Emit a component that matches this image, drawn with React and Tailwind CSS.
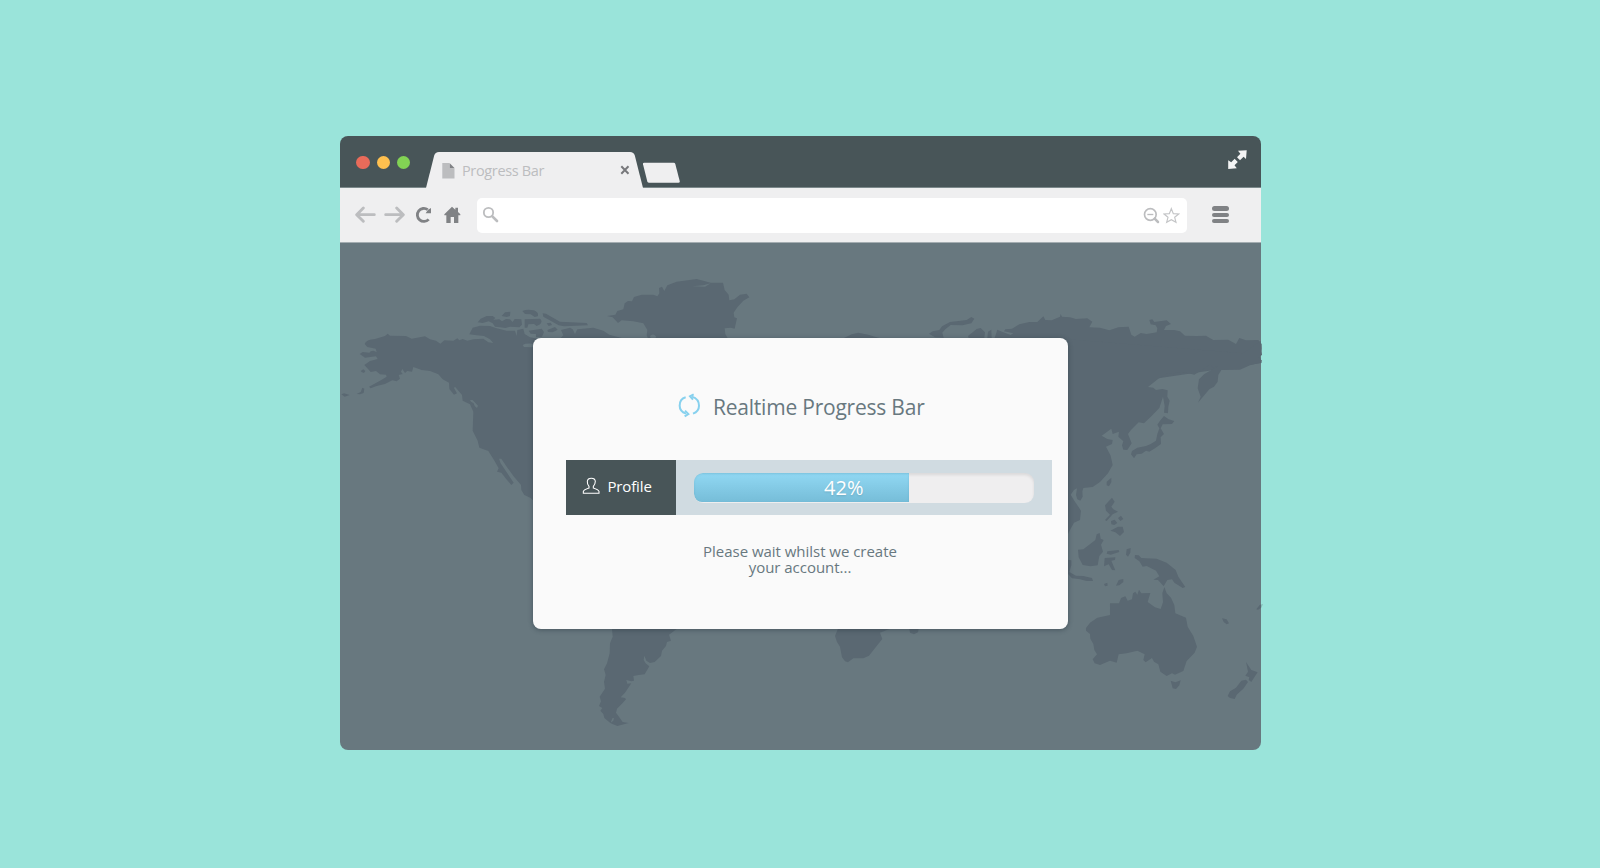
import React from "react";

function WorldMap() {
  return (
    <svg
      className="[grid-area:1/1] h-[507px] w-[921px] overflow-visible"
      viewBox="340 243 921 507"
      fill="#5a6872"
      aria-hidden="true"
    >
      {/* North America */}
      <g transform="translate(330 260) scale(0.33333)">
        <path d="M104 252Q108 239 135 237L165 228L173 221L180 227L228 228L245 236L285 229L300 238L318 242L331 251L343 241L370 242L382 235L388 241L398 237L412 242L430 238L460 236L475 247L490 249L480 238L462 228L440 226L418 223L428 203L450 197L480 198L500 205L530 212L555 212L560 228L562 210L580 206L584 222L600 232L640 240L800 250L830 330L760 440L700 560L660 640L720 700L680 735L608 720L602 714L583 705L574 690L573 675L552 650L530 620L514 596L507 596L512 610L530 637L551 668L544 675L528 656L514 638L501 635L506 625L492 600L475 573L448 563L443 542L428 512L430 455L420 433L398 422L396 405L375 380L372 384L381 400L372 404L358 387L357 368L338 358L325 343L300 333L275 330L250 321L246 335L232 333L225 339L217 327L213 335L218 342L206 345L210 356L200 364L187 361L165 372L140 378L122 385L117 380L150 362L170 350L168 344L150 343L138 333L122 336L112 325L103 315L120 303L143 297L138 289L105 293L89 282L98 276L118 278L122 274L130 272L140 276L137 266L112 261Z" />
        <path d="M92 333L100 328L106 333L102 339L95 336ZM34 403L42 400L59 405L44 410ZM80 402L92 396L97 383L103 386L101 399L90 403Z" />
        <path d="M420 420L428 420L444 437L441 444L434 438L431 430L423 425Z" fill="#68787f" />
        <path d="M578 255Q585 250 605 251L615 256L606 262L582 261Z" fill="#68787f" />
      </g>

      {/* Arctic islands and Greenland */}
      <g transform="translate(460 260) scale(0.33333)">
        <path d="M53 187L62 176L80 168L98 168L106 174L100 179L118 178L126 184L138 177L150 178L158 186L164 177L184 178L186 194L178 202L150 200L136 204L120 202L105 200L98 190L86 184L68 189Z" />
        <path d="M125 168L135 157L151 155L150 168L140 171ZM187 153Q200 147 222 151Q238 158 233 169L224 171L212 163L195 162ZM194 178L240 176Q250 185 238 194L230 198L222 192L205 193L202 203L194 203Z" />
        <path d="M248 160L258 161L300 185L380 189L384 196L312 199L296 196L250 170ZM260 190L272 188L276 195L266 198ZM262 210L285 201L293 209L278 217L264 216ZM206 212L245 206L252 216L246 230L228 231L228 222L212 221Z" />
        <path d="M303 210L330 203L338 208L345 222L352 208L400 203L430 212L448 224L485 234L500 250L290 250L280 234L300 236L310 226Z" />
        <path d="M441 168L466 164L472 153L490 148L494 130L504 123L516 124L522 111L545 104L580 104L592 109L598 100L597 84L606 80L613 93L622 76L650 65L710 57L752 68L789 68L794 90L806 104L808 121L823 118L840 104L860 101L868 112L850 122L832 142L821 158L823 172L831 175L824 206L812 203L794 205L796 222L804 236L790 270L740 340L680 400L620 330L575 260L560 226L562 210L550 190L520 184L485 181L474 189L465 179L458 172Z" />
        <path d="M697 79L730 76L752 70L735 80ZM570 228Q579 218 589 230L586 234L572 234Z" fill="#68787f" />
      </g>

      {/* Scandinavia and northern Asia */}
      <g transform="translate(780 300) scale(0.33333)">
        <path d="M192 114L215 103L235 98L265 104L295 113L330 125L420 130L430 155L540 140L560 122L680 112L700 100L672 94L676 88L696 86L718 73L748 66L772 66L790 49L796 60L815 61L840 50L842 42L846 50L870 52L888 57L922 55L937 65L928 82L960 83L988 91L1015 82L1046 80L1054 104L1064 110L1082 99L1100 102L1130 97L1132 85L1127 76L1112 73L1108 60L1117 58L1123 66L1160 61L1173 72L1158 78L1152 90L1182 90L1200 94L1215 107L1250 108L1278 107L1300 120L1345 119L1368 132L1378 114L1398 121L1435 120L1445 132L1445 146L1440 168L1445 189L1100 240L860 280L500 300L260 300L130 260L150 190Z" />
        <path d="M447 101L458 94L478 90L486 79L510 66L560 60L574 51L583 56L574 70L548 76L512 75L496 88L487 98L491 113L465 112ZM564 108L590 87L602 84L615 97L613 114L566 114ZM622 114L624 95L634 89L635 114ZM644 114L652 89L668 96L690 104L696 114Z" />
      </g>

      {/* East Asia */}
      <g transform="translate(1050 300) scale(0.33333)">
        <path d="M-40 110L580 160L632 122L636 165L626 172L636 182L632 188L600 196L570 209L514 210L505 225L503 245L492 260L478 268L444 308L452 290L443 265L447 238L463 222L506 198L490 203L480 192L462 206L433 224L400 216L350 222L325 236L294 261L310 263L318 270L337 267L353 271L352 290L359 302L355 320L354 340L342 338L344 318L339 290L328 324L304 349L282 370L266 367L243 390L234 402L245 430L232 450L220 449L216 436L220 424L205 410L207 395L188 402L184 386L155 407L172 417L188 420L186 432L168 440L182 467L188 495L174 520L150 546L128 561L100 564L97 574L98 590L91 602L82 598L78 585L81 565L72 570L62 584L73 602L93 632L90 660L72 668L60 690L45 720L0 640L-100 560L-300 500L-300 200Z" />
        <path d="M322 374L330 362L342 348L356 358L373 363L366 372L338 373L332 385L342 402L332 412L333 432L315 445L298 455L288 452L275 461L260 463L252 475L243 463L246 453L262 443L288 438L302 432L318 422L322 402L328 385ZM170 545L184 533L184 547L177 559L170 556ZM176 604L186 593L194 605L184 620L190 628L204 635L188 643L170 663L165 660L180 644L168 632L165 616ZM183 663L194 659L202 669L193 675L184 673ZM204 654L213 647L220 657L211 663Z" />
      </g>

      {/* Oceania */}
      <g transform="translate(1050 500) scale(0.33333)">
        <path d="M181 92L204 80L218 80L222 96L210 108L196 97ZM84 149L100 148L136 120L140 103L149 99L152 116L161 120L153 134L159 155L148 168L143 196L122 199L98 195L86 172ZM172 154L206 150L208 156L182 164L170 161ZM228 164L230 148L242 144L241 158L234 170ZM164 174L196 172L195 180L184 182L196 211L186 210L176 193L162 199Z" />
        <path d="M254 174L255 165L266 166L274 174L320 176L350 188L377 210L385 230L406 261L398 264L373 248L366 238L352 240L341 259L324 240L310 239L328 229L318 212L290 198L278 200L268 184ZM198 257L206 240L220 237L220 246L208 256ZM162 252L172 248L173 257L165 259ZM40 178L64 181L64 196L58 216L78 227L100 228L126 234L129 243L110 243L90 238L66 235L48 215Z" />
        <path d="M108 384L120 368L142 353L180 345L180 310L207 310L213 294L226 289L233 302L246 298L249 280L256 275L262 284L267 269L274 280L301 279L293 306L315 322L332 327L339 307L337 280L343 261L350 280L363 293L373 315L376 340L408 353L413 380L430 408L441 440L434 458L410 483L400 513L375 524L366 520L350 528L331 515L325 493L312 485L306 474L287 487L280 480L284 463L262 452L230 460L206 463L200 488L180 482L150 495L134 490L128 478L141 463L133 450L130 432L121 416L120 402L108 392Z" />
        <path d="M362 542L376 547L392 541L388 556L378 567L368 565ZM516 355L530 358L537 370L530 373L521 366ZM588 486L596 498L604 510L623 517L614 530L604 546L596 540L598 532L586 527L594 515ZM533 588L540 574L558 563L574 542L588 539L594 546L580 566L560 584L554 597L540 594Z" />
        <path d="M619 328L629 315L633 313.500V324L624 329Z" />
        <path d="M633 313.500L639 312L634 323.500L633 324Z" fill="#84bdb8" />
      </g>

      {/* South America and southern Africa */}
      <g transform="translate(520 600) scale(0.33333)">
        <path d="M276 86L278 110L270 130L269 160L261 190L252 208L257 225L252 245L255 266L239 290L243 304L237 318L247 324L241 332L250 342L253 354L272 370L292 378L326 369L308 366L298 352L288 338L291 326L308 309L318 298L315 294L302 292L315 278L326 262L334 250L322 251L319 240L334 244L342 242L340 228L356 225L374 223L388 199L377 190L371 180L373 167L379 182L390 189L404 186L423 168L426 152L438 138L441 126L453 122L447 104L470 87L520 50L530 -40L440 -160L300 -260L190 -200L170 -80L230 20Z" />
        <path d="M272 368L277 355L282 354L280 362Z" fill="#68787f" />
        <path d="M954 86L945 108L951 126L960 140L966 172L975 184L984 187L1000 175L1030 175L1047 167L1070 138L1087 117L1080 98L1110 86L1150 0L1180 -160L1060 -330L840 -370L740 -260L800 -150L920 -100L920 40ZM1168 86L1170 98L1182 103L1194 97L1196 86L1218 0L1200 -40L1170 10Z" />
      </g>
    </svg>
  );
}

function TitleBar() {
  return (
    <header className="flex h-[52px] items-start rounded-t-lg border-b border-[#7c898b] bg-[#485558]">
      <div className="mt-[19.500px] ml-[16.250px] flex gap-[6.750px]">
        <span className="h-[13.500px] w-[13.500px] rounded-full bg-[#e96b5a]" />
        <span className="h-[13.500px] w-[13.500px] rounded-full bg-[#ffc04f]" />
        <span className="h-[13.500px] w-[13.500px] rounded-full bg-[#82d354]" />
      </div>
      <div className="mt-4 ml-[15.750px] grid h-9 w-[217px]">
        <svg className="[grid-area:1/1] h-9 w-[217px]" viewBox="0 0 217 36">
          <path d="M0 36L8.200 3.500Q9.200 0 13 0H204Q207.800 0 208.800 3.500L217 36Z" fill="#efeff0" />
        </svg>
        <div className="[grid-area:1/1] flex items-start">
          <svg className="mt-[10.500px] ml-4 h-4 w-[13px]" viewBox="0 0 13 16">
            <path d="M.3 0H7V5H12.500V15.500H.3Z" fill="#bcbdbf" />
            <path d="M7.500 0L12.500 5H7.500Z" fill="#808285" />
          </svg>
          <span className="mt-2 ml-[7px] w-[150px] text-[14.500px] leading-[22px] tracking-[-0.35px] whitespace-nowrap text-[#bcbdbf]">
            Progress Bar
          </span>
          <svg className="mt-[13px] ml-2 h-[10px] w-[10px]" viewBox="0 0 10 10">
            <path d="M1.300 1.300L8.500 8.700M8.500 1.300L1.300 8.700" stroke="#77787b" strokeWidth="2" fill="none" />
          </svg>
        </div>
      </div>
      <svg className="mt-[26px] h-[22px] w-[38px]" viewBox="0 0 38 22">
        <path d="M1.200 .7H30.700Q31.900 .7 32.300 2L36.700 19Q37 20.700 35.500 20.700H6.200Q4.700 20.700 4.300 19.500L0 2.200Q-.3 .7 1.200 .7Z" fill="#efeff0" />
      </svg>
      <svg className="mt-[14px] mr-[14px] ml-auto h-[19px] w-[19px]" viewBox="0 0 19 19" fill="#f3f4f4">
        <path d="M10 .8L18.700 .2L18 9L15.600 6.800L12 10.300L9 7.300L12.400 3.700Z" />
        <path d="M.2 10.300L3.200 12.300L6.700 8.800L9.800 11.900L6.500 15.300L8.800 18.300L.2 19Z" />
        <path d="M8.700 7.500L11.800 10.600M7.100 8.800L10.200 12" stroke="#485558" strokeWidth=".5" strokeDasharray="1.200 1" />
      </svg>
    </header>
  );
}

function Toolbar() {
  return (
    <div className="flex h-[55px] items-start border-b border-[#a4adb1] bg-[#efeff0]">
      <svg className="mt-[18px] ml-[15px] h-[18px] w-[21px]" viewBox="76 243 63 54" fill="none" stroke="#bcbdbf" strokeWidth="8.500" strokeLinecap="round" strokeLinejoin="round">
        <path d="M134 269H83M101 249L81 269L101 289" />
      </svg>
      <svg className="mt-[18px] ml-2 h-[18px] w-[21px]" viewBox="163 243 63 54" fill="none" stroke="#bcbdbf" strokeWidth="8.500" strokeLinecap="round" strokeLinejoin="round">
        <path d="M168 269H219M201 249L221 269L201 289" />
      </svg>
      <svg className="mt-[18px] ml-[10px] h-[18px] w-[17px]" viewBox="255 243 51 54">
        <path d="M293 254A19.500 19.500 0 1 0 296 283" fill="none" stroke="#808285" strokeWidth="8.500" />
        <path d="M303 249V265H287L291 259L294 254Z" fill="#808285" />
      </svg>
      <svg className="mt-[18px] ml-[11.500px] h-[18px] w-[17px]" viewBox="341 243 51 54" fill="#808285">
        <path d="M365 245L375 254V248H383V261L390 268V271H384V294H371V276H361V294H348V271H342V268Z" />
      </svg>
      <div className="mt-[9.500px] ml-[16px] flex h-[35.500px] w-[710px] items-start rounded-[5px] bg-white">
        <svg className="mt-[8.500px] ml-[5.500px] h-[18px] w-[18px]" viewBox="458 243 54 54" fill="none" stroke="#bcbdbf">
          <circle cx="477.500" cy="262.500" r="14" strokeWidth="5.500" />
          <path d="M489 274L503 288" strokeWidth="8" strokeLinecap="round" />
        </svg>
        <svg className="mt-[9.500px] ml-auto h-[18px] w-[18px]" viewBox="101 246 54 54" fill="none" stroke="#bcbdbf">
          <circle cx="123" cy="268.500" r="17.500" strokeWidth="5" />
          <path d="M114 268.500H132" strokeWidth="4" />
          <path d="M136 281L146 291" strokeWidth="7.500" strokeLinecap="round" />
        </svg>
        <svg className="mt-[9.500px] mr-[6.500px] ml-[2px] h-[18px] w-[17px]" viewBox="160 246 51 54" fill="none" stroke="#c4c5c7" strokeWidth="3.500">
          <path d="M185 251L191 266L207 267L195 277L199 292L185 284L171 292L175 277L163 267L179 266Z" />
        </svg>
      </div>
      <div className="mt-[18.250px] ml-[25.500px] flex w-[17px] flex-col gap-[2px]">
        <span className="h-[4.300px] rounded-full bg-[#808285]" />
        <span className="h-[4.300px] rounded-full bg-[#808285]" />
        <span className="h-[4.300px] rounded-full bg-[#808285]" />
      </div>
    </div>
  );
}

function ProgressRow({ label, percent }) {
  return (
    <div className="flex h-[55px] w-[486px] bg-[#d0dbe1]">
      <div className="flex h-full w-[110px] items-start bg-[#485558] text-white">
        <svg className="mt-[17px] ml-4 h-[18px] w-[19px]" viewBox="172 321 57 54" fill="none" stroke="#fff" strokeWidth="3.200">
          <path d="M193 349Q187 341 188 334Q189 325 200 325Q211 325 212 334Q212 342 206 349V354Q221 359 223 364V370H176V364Q178 359 193 354Z" />
        </svg>
        <span className="mt-[15px] ml-[6.500px] text-[15px] leading-[22px] tracking-[-0.15px]">{label}</span>
      </div>
      <div className="mt-[13px] ml-[18px] grid h-[30px] w-[340px] overflow-hidden rounded-[9px] bg-[#efeeef] shadow-[inset_0_2px_3px_rgba(0,0,0,0.09)]">
        <div className="[grid-area:1/1] h-[29px] w-[215px] rounded-l-[8px] bg-linear-to-b from-[#91d8f3] to-[#76bdd8] shadow-[inset_0_1px_2px_rgba(60,130,160,0.25)]" />
        <span className="[grid-area:1/1] ml-[130px] text-[20px] leading-[29px] tracking-[0.1px] text-white [text-shadow:0_1px_2px_rgba(0,0,0,0.12)]">
          {percent}%
        </span>
      </div>
    </div>
  );
}

function ProgressCard() {
  return (
    <section className="z-10 [grid-area:1/1] mt-[95px] ml-[193px] flex h-[291px] w-[535px] flex-col rounded-lg bg-[#fcfcfc]/99 pl-[33px] text-[#68787f] shadow-[0_1px_5px_rgba(30,45,55,0.45)]">
      <div className="mt-[55px] flex h-[30px] items-start pl-[112px]">
        <svg className="h-[25px] w-[23px]" viewBox="459 69 69 75" fill="none" stroke="#87d1ee" strokeWidth="6">
          <path d="M482 82Q464 87 464 107Q464 124 483 131M504 131Q522 124 522 107Q522 87 501 80" />
          <path d="M480 122L490 132L479 139M506 73L495 79L504 89" />
        </svg>
        <h1 className="mt-[-1px] ml-[12px] text-[21px] leading-[30px] tracking-[-0.220px] whitespace-nowrap">Realtime Progress Bar</h1>
      </div>
      <div className="mt-[37px]">
        <ProgressRow label="Profile" percent={42} />
      </div>
      <p className="mt-[28px] w-[468px] text-center text-[15px] leading-4 tracking-[-0.03px]">
        Please wait whilst we create
        <br />
        your account...
      </p>
    </section>
  );
}

export default function App() {
  return (
    <main className="h-[868px] w-[1600px] overflow-hidden bg-[#9ae4da] pt-[136px] pl-[340px] font-['Open_Sans','Noto_Sans',sans-serif]">
      <div className="w-[921px]">
        <TitleBar />
        <Toolbar />
        <div className="grid h-[507px] rounded-b-lg bg-[#68787f]">
          <WorldMap />
          <ProgressCard />
        </div>
      </div>
    </main>
  );
}
